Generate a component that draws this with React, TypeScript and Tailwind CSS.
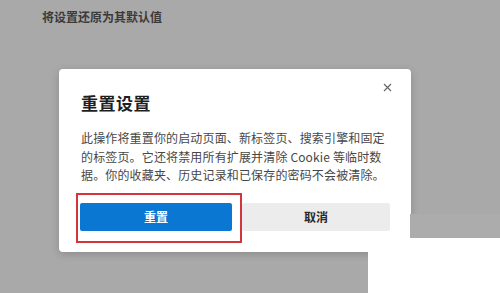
export default function App() {
    return (
        <div
            className="relative w-[500px] h-[293px] overflow-hidden bg-[#a9a9a9]"
            style={{ fontFamily: '"Noto Sans CJK SC", "Noto Sans", sans-serif' }}
        >
            {/* Page heading behind the overlay */}
            <div className="pl-[42px] pt-[9px] text-[12px] leading-[16px] font-bold text-[#3a3a3a]">
                将设置还原为其默认值
            </div>

            {/* Dialog */}
            <div className="ml-[59px] mt-[44px] w-[352px] h-[183px] bg-white rounded-[4px] shadow-[0_2px_8px_rgba(0,0,0,0.18)] flex flex-col px-[21px] pt-[14px]">
                <div className="flex justify-end h-[8px]">
                    <button className="text-[#666] -mr-[2px]">
                        <svg width="9" height="9" viewBox="0 0 9 9" stroke="currentColor" strokeWidth="1.2">
                            <path d="M1 1L8 8M8 1L1 8" />
                        </svg>
                    </button>
                </div>
                <h2 className="pl-[1px] mt-0 text-[17px] leading-[24px] font-bold text-[#1f1f1f] tracking-[0.5px]">
                    重置设置
                </h2>
                <p className="pl-[1px] mt-[14px] text-[12px] leading-[18.5px] text-[#474747] tracking-[0.15px] whitespace-nowrap">
                    此操作将重置你的启动页面、新标签页、搜索引擎和固定
                    <br />
                    的标签页。它还将禁用所有扩展并清除 Cookie 等临时数
                    <br />
                    据。你的收藏夹、历史记录和已保存的密码不会被清除。
                </p>
                <div className="mt-[18px] flex gap-[10px]">
                    <div className="relative">
                        <button className="w-[152px] h-[28px] rounded-[2px] bg-[#0a78d2] text-white text-[12px] font-bold">
                            重置
                        </button>
                        {/* red highlight frame */}
                        <div className="absolute left-[-4px] top-[-10px] w-[166px] h-[50px] border-2 border-[#d2363c]" />
                    </div>
                    <button className="w-[148px] h-[28px] rounded-[2px] bg-[#ececec] text-[#2a2a2a] text-[12px] font-bold">
                        取消
                    </button>
                </div>
            </div>

            {/* cover patches at bottom right */}
            <div className="absolute left-[410px] top-[214px] w-[90px] h-[24px] bg-[#acacac]" />
            <div className="absolute left-[368px] top-[238px] w-[132px] h-[55px] bg-white" />
        </div>
    );
}
